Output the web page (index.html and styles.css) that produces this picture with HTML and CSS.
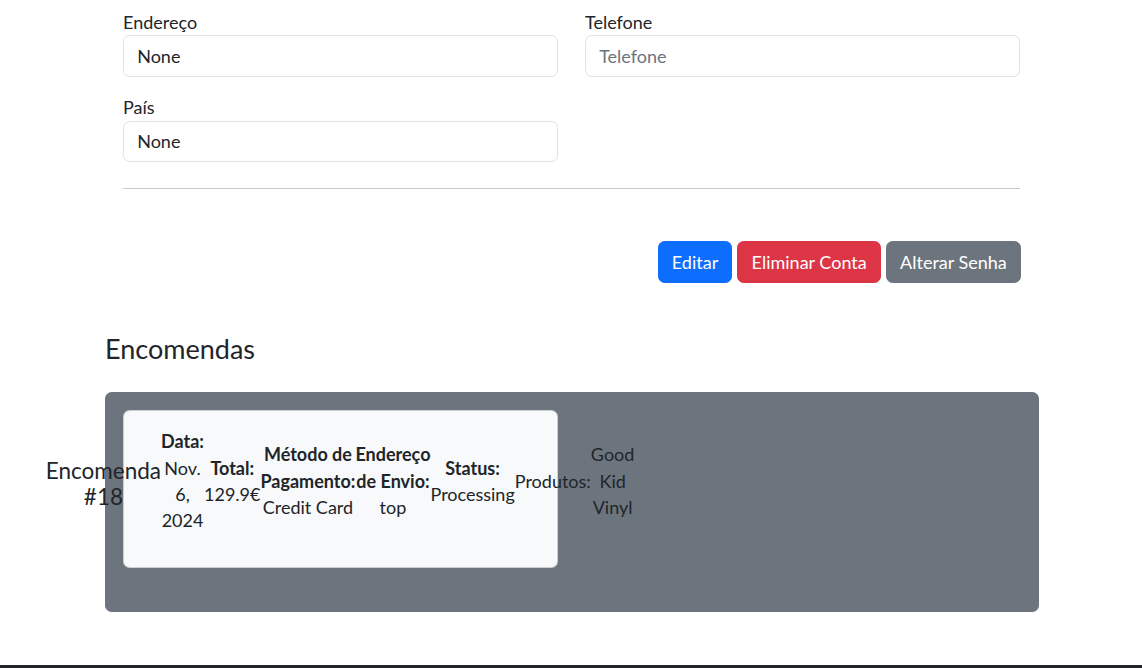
FILE: index.html
```html
<!DOCTYPE html>
<html lang="pt">
<head>
<meta charset="utf-8">
<title>Perfil</title>
<link rel="stylesheet" href="styles.css">
</head>
<body>
<main class="page-content">
  <form class="profile-form">
    <div class="form-row">
      <div class="field">
        <label class="field-label">Endereço</label>
        <input class="field-input" type="text" value="None">
      </div>
      <div class="field">
        <label class="field-label">Telefone</label>
        <input class="field-input" type="text" placeholder="Telefone">
      </div>
    </div>
    <div class="form-row">
      <div class="field">
        <label class="field-label">País</label>
        <input class="field-input" type="text" value="None">
      </div>
    </div>
    <hr class="divider">
    <div class="actions">
      <button type="button" class="btn btn-primary">Editar</button>
      <button type="button" class="btn btn-danger">Eliminar Conta</button>
      <button type="button" class="btn btn-secondary">Alterar Senha</button>
    </div>
  </form>

  <h4 class="section-title">Encomendas</h4>
  <section class="orders-box">
    <div class="order-card">
      <div class="order-row">
        <h5 class="order-title">Encomenda<br>#18</h5>
        <div class="order-cell"><strong>Data:</strong><br>Nov.<br>6,<br>2024</div>
        <div class="order-cell"><strong>Total:</strong><br>129.9€</div>
        <div class="order-cell"><strong>Método de<br>Pagamento:</strong><br>Credit Card</div>
        <div class="order-cell"><strong>Endereço<br>de Envio:</strong><br>top</div>
        <div class="order-cell"><strong>Status:</strong><br>Processing</div>
        <div class="order-cell">Produtos:</div>
        <div class="order-cell">Good<br>Kid<br>Vinyl</div>
      </div>
    </div>
  </section>
</main>
<footer class="footer"></footer>
</body>
</html>
```

FILE: styles.css
```css
html {
  font-size: 17.6px;
}

body {
  margin: 0;
  font-family: Lato, "Noto Sans", sans-serif;
  font-size: 18px;
  line-height: 26.4px;
  color: #212529;
  background: #fff;
}

.page-content {
  width: 934px;
  margin-left: 105px;
  padding-top: 8.6px;
}

.profile-form {
  padding: 0 19px 0 18px;
}

.form-row {
  display: flex;
  gap: 27px;
  margin-bottom: 17.6px;
}

.field {
  flex: 0 0 435px;
  display: flex;
  flex-direction: column;
}

.field-label {
  line-height: 26.4px;
}

.field-input {
  box-sizing: border-box;
  height: 41.6px;
  padding: 6.6px 13.2px;
  border: 1px solid #dee2e6;
  border-radius: 6.6px;
  font: inherit;
  color: #212529;
  background: #fff;
  outline: none;
}

.field-input::placeholder {
  color: #6c757d;
  opacity: 1;
}

.divider {
  border: 0;
  border-top: 1px solid #c8c9ca;
  margin: 25.8px 0 52px;
  height: 0;
}

.actions {
  display: flex;
  justify-content: flex-end;
  gap: 5px;
  margin-right: -1px;
}

.btn {
  box-sizing: border-box;
  height: 41.6px;
  padding: 6.6px 13.2px;
  border: 1px solid transparent;
  border-radius: 6.6px;
  font: inherit;
  line-height: 26.4px;
  color: #fff;
}

.btn-primary {
  background: #0d6efd;
  border-color: #0d6efd;
}

.btn-danger {
  background: #dc3545;
  border-color: #dc3545;
}

.btn-secondary {
  background: #6c757d;
  border-color: #6c757d;
}

.section-title {
  margin: 50.4px 0 27.3px;
  font-size: 27px;
  font-weight: 400;
  line-height: 31.7px;
}

.orders-box {
  box-sizing: border-box;
  width: 934px;
  padding: 17.6px;
  background: #6c757d;
  border-radius: 6.6px;
}

.order-card {
  box-sizing: border-box;
  width: 435px;
  padding: 17.6px;
  margin-bottom: 26.4px;
  background: #f8f9fa;
  border: 1px solid rgba(0, 0, 0, 0.175);
  border-radius: 6.6px;
}

.order-row {
  display: flex;
  justify-content: center;
  align-items: center;
  margin-bottom: 16px;
}

.order-title {
  margin: 7px 0 0;
  font-size: 22.5px;
  font-weight: 400;
  line-height: 26px;
  text-align: center;
  white-space: nowrap;
}

.order-cell {
  text-align: center;
  white-space: nowrap;
}

.order-cell strong {
  font-weight: 700;
}

.footer {
  height: 3px;
  margin-top: 53px;
  background: #212529;
}
```
